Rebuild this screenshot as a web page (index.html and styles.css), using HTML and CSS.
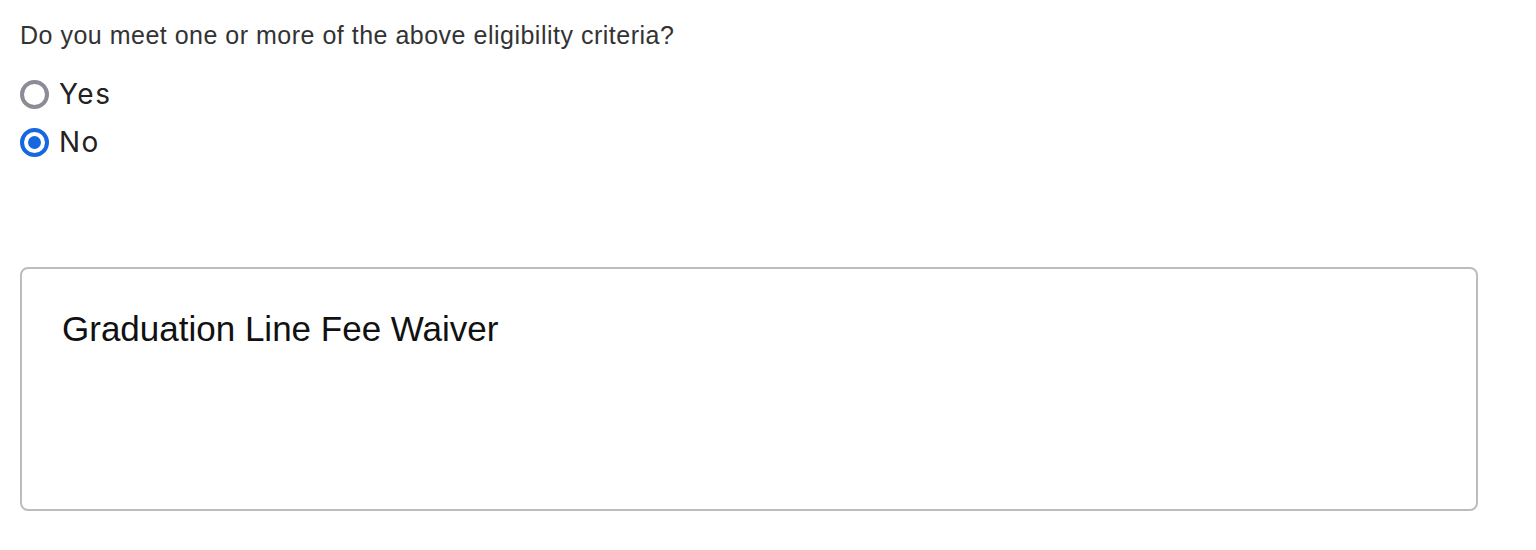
FILE: index.html
```html
<!DOCTYPE html>
<html>
<head>
<meta charset="utf-8">
<link rel="stylesheet" href="styles.css">
</head>
<body>
<div class="page">
  <fieldset class="question">
    <legend class="question-text">Do you meet one or more of the above eligibility criteria?</legend>
    <div class="options">
      <label class="option">
        <span class="radio"></span>
        <span class="option-label">Yes</span>
      </label>
      <label class="option">
        <span class="radio radio-checked"></span>
        <span class="option-label">No</span>
      </label>
    </div>
  </fieldset>
  <section class="card">
    <h2 class="card-title">Graduation Line Fee Waiver</h2>
  </section>
</div>
</body>
</html>
```

FILE: styles.css
```css
html, body {
  margin: 0;
  padding: 0;
  background: #ffffff;
}

.page {
  padding: 21px 58px 0 20px;
  font-family: "Liberation Sans", Arial, sans-serif;
}

.question {
  border: 0;
  margin: 0;
  padding: 0;
}

.question-text {
  padding: 0;
  font-size: 25px;
  letter-spacing: 0.5px;
  line-height: 28px;
  color: #333333;
}

.options {
  display: flex;
  flex-direction: column;
  gap: 20px;
  margin-top: 31px;
}

.option {
  display: flex;
  align-items: center;
  gap: 10px;
  height: 28px;
}

.radio {
  box-sizing: border-box;
  width: 29px;
  height: 29px;
  border-radius: 50%;
  border: 4px solid #8d8c96;
  background: #fff;
  display: flex;
  align-items: center;
  justify-content: center;
}

.radio-checked {
  border-color: #1667e0;
}

.radio-checked::after {
  content: "";
  width: 13px;
  height: 13px;
  border-radius: 50%;
  background: #1667e0;
}

.option-label {
  font-family: Inter, "Noto Sans", sans-serif;
  font-size: 28px;
  letter-spacing: 1.5px;
  color: #222222;
  line-height: 28px;
}

.card {
  margin-top: 111px;
  border: 2px solid #bdbdbd;
  border-radius: 8px;
  box-sizing: border-box;
  height: 244px;
  padding: 40px 40px;
}

.card-title {
  margin: 0;
  font-weight: 400;
  font-size: 35px;
  line-height: 40px;
  color: #111111;
}
```
